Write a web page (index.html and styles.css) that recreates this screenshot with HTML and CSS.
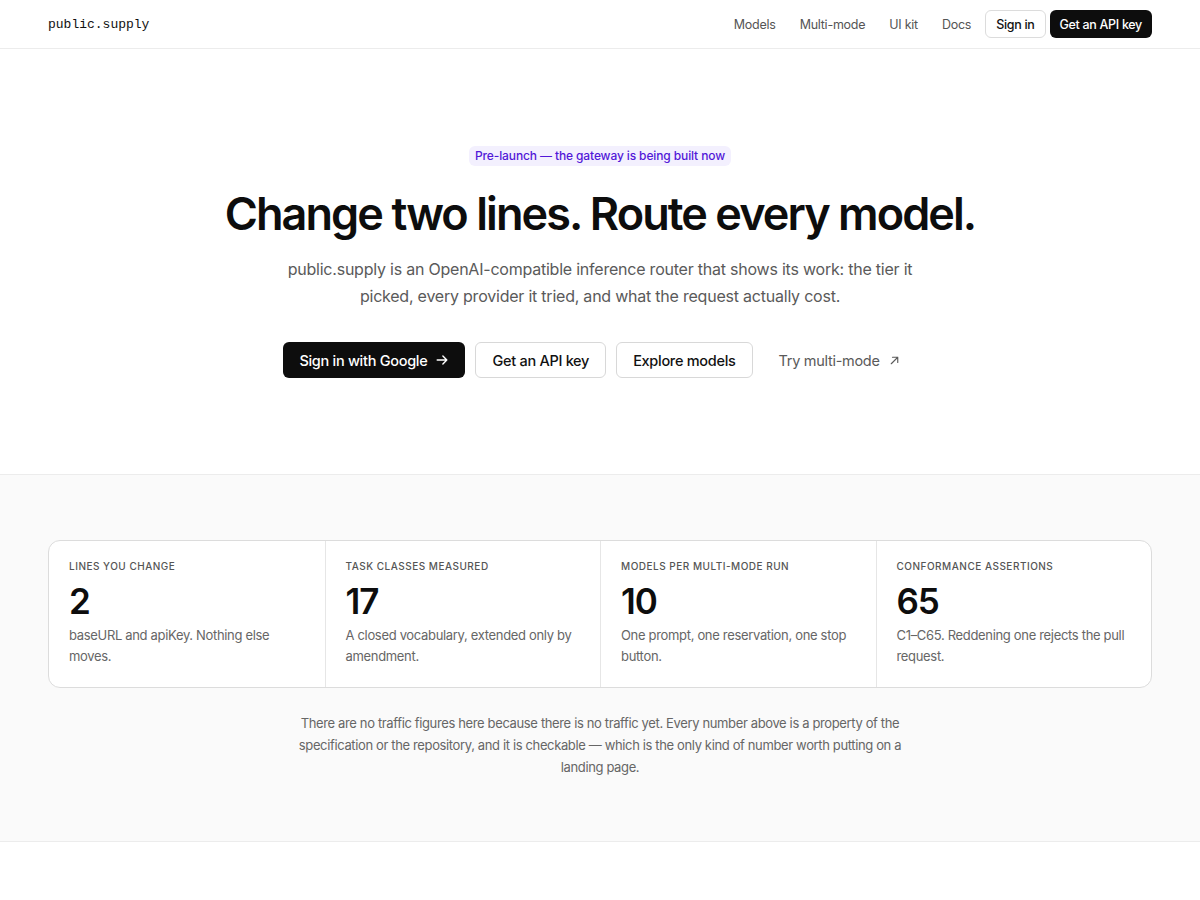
FILE: index.html
```html
<!DOCTYPE html>
<html lang="en">
<head>
<meta charset="utf-8">
<title>public.supply</title>
<link rel="stylesheet" href="styles.css">
</head>
<body>
<header class="nav">
  <a class="logo" href="#">public.supply</a>
  <nav class="nav-right">
    <a class="nav-link" href="#">Models</a>
    <a class="nav-link" href="#">Multi-mode</a>
    <a class="nav-link" href="#">UI kit</a>
    <a class="nav-link" href="#">Docs</a>
    <a class="nav-btn nav-btn-outline" href="#">Sign in</a>
    <a class="nav-btn nav-btn-dark" href="#">Get an API key</a>
  </nav>
</header>

<section class="hero">
  <div class="badge">Pre-launch — the gateway is being built now</div>
  <h1 class="title">Change two lines. Route every model.</h1>
  <p class="lead">public.supply is an OpenAI-compatible inference router that shows its work: the tier it picked, every provider it tried, and what the request actually cost.</p>
  <div class="actions">
    <a class="btn btn-dark" href="#">Sign in with Google
      <svg class="icon" viewBox="0 0 16 16" width="14" height="14" fill="none" stroke="currentColor" stroke-width="1.6" stroke-linecap="round" stroke-linejoin="round"><path d="M2.5 8h11M9 3.5 13.5 8 9 12.5"/></svg>
    </a>
    <a class="btn btn-outline" href="#">Get an API key</a>
    <a class="btn btn-outline" href="#">Explore models</a>
    <a class="btn btn-ghost" href="#">Try multi-mode
      <svg class="icon" viewBox="0 0 16 16" width="13" height="13" fill="none" stroke="currentColor" stroke-width="1.4" stroke-linecap="round" stroke-linejoin="round"><path d="M4 12 12 4M5.5 4H12v6.5"/></svg>
    </a>
  </div>
</section>

<section class="stats-section">
  <div class="stats">
    <div class="stat">
      <div class="stat-label">Lines you change</div>
      <div class="stat-value">2</div>
      <div class="stat-desc">baseURL and apiKey. Nothing else moves.</div>
    </div>
    <div class="stat">
      <div class="stat-label">Task classes measured</div>
      <div class="stat-value">17</div>
      <div class="stat-desc">A closed vocabulary, extended only by amendment.</div>
    </div>
    <div class="stat">
      <div class="stat-label">Models per multi-mode run</div>
      <div class="stat-value">10</div>
      <div class="stat-desc">One prompt, one reservation, one stop button.</div>
    </div>
    <div class="stat">
      <div class="stat-label">Conformance assertions</div>
      <div class="stat-value">65</div>
      <div class="stat-desc">C1–C65. Reddening one rejects the pull request.</div>
    </div>
  </div>
  <p class="footnote">There are no traffic figures here because there is no traffic yet. Every number above is a property of the specification or the repository, and it is checkable — which is the only kind of number worth putting on a landing page.</p>
</section>

<section class="after"></section>
</body>
</html>
```

FILE: styles.css
```css
* { box-sizing: border-box; }
html, body { margin: 0; padding: 0; }
body {
  font-family: Inter, "Noto Sans", sans-serif;
  color: #111;
  background: #fff;
  -webkit-font-smoothing: antialiased;
}
a { text-decoration: none; color: inherit; }

.nav {
  height: 49px;
  padding: 0 48px;
  border-bottom: 1px solid #ececec;
  display: flex;
  align-items: center;
  justify-content: space-between;
}
.logo {
  font-family: "Liberation Mono", "DejaVu Sans Mono", monospace;
  font-size: 13px;
  color: #111;
}
.nav-right {
  display: flex;
  align-items: center;
}
.nav-link {
  font-size: 12.5px;
  color: #555;
  padding: 0 12px;
  letter-spacing: -0.02em;
}
.nav-btn {
  height: 28px;
  display: inline-flex;
  align-items: center;
  padding: 0 10px;
  border-radius: 6px;
  font-size: 12.5px;
  font-weight: 500;
  letter-spacing: -0.025em;
}
.nav-btn-outline {
  margin-left: 2px;
  border: 1px solid #dcdcdc;
  color: #111;
}
.nav-btn-dark {
  margin-left: 4px;
  background: #0d0d0d;
  color: #fff;
}

.hero {
  padding: 97px 48px 96px;
  border-bottom: 1px solid #ececec;
  display: flex;
  flex-direction: column;
  align-items: center;
  text-align: center;
}
.badge {
  height: 20px;
  line-height: 20px;
  padding: 0 6px;
  border-radius: 6px;
  background: #f3f0fe;
  color: #5218d8;
  font-size: 12px;
  font-weight: 500;
  letter-spacing: -0.01em;
}
.title {
  margin: 24px 0 0;
  font-size: 45px;
  line-height: 48px;
  font-weight: 600;
  letter-spacing: -0.043em;
  color: #0d0d0d;
}
.lead {
  margin: 18px 0 0;
  max-width: 640px;
  font-size: 16px;
  line-height: 27px;
  color: #5a5a5a;
  letter-spacing: -0.014em;
}
.actions {
  margin-top: 32px;
  display: flex;
  align-items: center;
  gap: 10px;
}
.btn {
  height: 36px;
  display: inline-flex;
  align-items: center;
  gap: 8px;
  padding: 0 16px;
  border-radius: 6px;
  font-size: 14.5px;
  font-weight: 500;
  letter-spacing: -0.02em;
}
.btn-dark { background: #0d0d0d; color: #fff; }
.btn-outline { border: 1px solid #d8d8d8; color: #111; background: #fff; }
.btn-ghost { color: #5a5a5a; font-weight: 400; padding: 0 16px; }
.icon { flex: none; }

.stats-section {
  background: #fafafa;
  padding: 65px 48px 63px;
  border-bottom: 1px solid #ececec;
}
.stats {
  display: grid;
  grid-template-columns: repeat(4, 1fr);
  border: 1px solid #dcdcdc;
  border-radius: 12px;
  background: #fff;
}
.stat {
  padding: 18px 20px 20px 20px;
  border-left: 1px solid #e6e6e6;
}
.stat:first-child { border-left: 0; }
.stat-label {
  font-size: 10px;
  line-height: 14px;
  text-transform: uppercase;
  letter-spacing: 0.05em;
  color: #555;
  font-weight: 500;
}
.stat-value {
  margin-top: 8px;
  font-size: 35px;
  line-height: 40px;
  font-weight: 600;
  letter-spacing: -0.03em;
  color: #0d0d0d;
}
.stat-desc {
  margin-top: 4px;
  font-size: 13px;
  line-height: 21px;
  color: #666;
  letter-spacing: -0.025em;
}
.footnote {
  margin: 24px auto 0;
  max-width: 625px;
  text-align: center;
  font-size: 13px;
  line-height: 22px;
  color: #666;
  letter-spacing: -0.028em;
}
.after { height: 58px; }
```
